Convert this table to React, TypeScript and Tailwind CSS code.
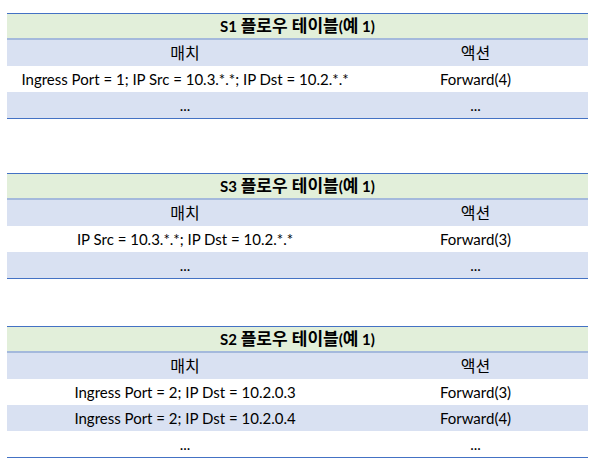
const font = { fontFamily: 'Lato, "Noto Sans CJK KR", sans-serif' };

type Row = [string, string];

function FlowTable({ sw, rows, className }: { sw: string; rows: Row[]; className?: string }) {
  return (
    <div className={"mx-[7px] w-[581px] border-t border-b border-[#4472c4] " + (className ?? "")}>
      <div className="h-[24px] bg-[#e2efda] flex items-center justify-center text-[15px] font-bold text-black">
        <span>{sw}&nbsp;</span>
        <span className="text-[17px]">플로우 테이블</span>
        <span>(</span>
        <span className="text-[17px]">예</span>
        <span>&nbsp;1)</span>
      </div>
      <div className="h-[2px] bg-[#a4b9dc]" />
      <div className="flex h-[26px] items-center bg-[#d9e1f2] text-[16px] text-black">
        <div className="w-[356px] text-center">매치</div>
        <div className="flex-1 text-center">액션</div>
      </div>
      {rows.map((r, i) => (
        <div
          key={i}
          className={
            "flex h-[26px] items-center text-[15px] text-black " + (i % 2 === 1 ? "bg-[#d9e1f2]" : "bg-white")
          }
        >
          <div className="w-[356px] text-center">{r[0]}</div>
          <div className="flex-1 text-center">{r[1]}</div>
        </div>
      ))}
    </div>
  );
}

export default function App() {
  return (
    <div className="w-[600px] h-[464px] bg-white pt-[13px]" style={font}>
      <FlowTable
        sw="S1"
        rows={[
          ["Ingress Port = 1; IP Src = 10.3.*.*; IP Dst = 10.2.*.*", "Forward(4)"],
          ["...", "..."],
        ]}
      />
      <FlowTable
        className="mt-[54px]"
        sw="S3"
        rows={[
          ["IP Src = 10.3.*.*; IP Dst = 10.2.*.*", "Forward(3)"],
          ["...", "..."],
        ]}
      />
      <FlowTable
        className="mt-[47px]"
        sw="S2"
        rows={[
          ["Ingress Port = 2; IP Dst = 10.2.0.3", "Forward(3)"],
          ["Ingress Port = 2; IP Dst = 10.2.0.4", "Forward(4)"],
          ["...", "..."],
        ]}
      />
    </div>
  );
}
